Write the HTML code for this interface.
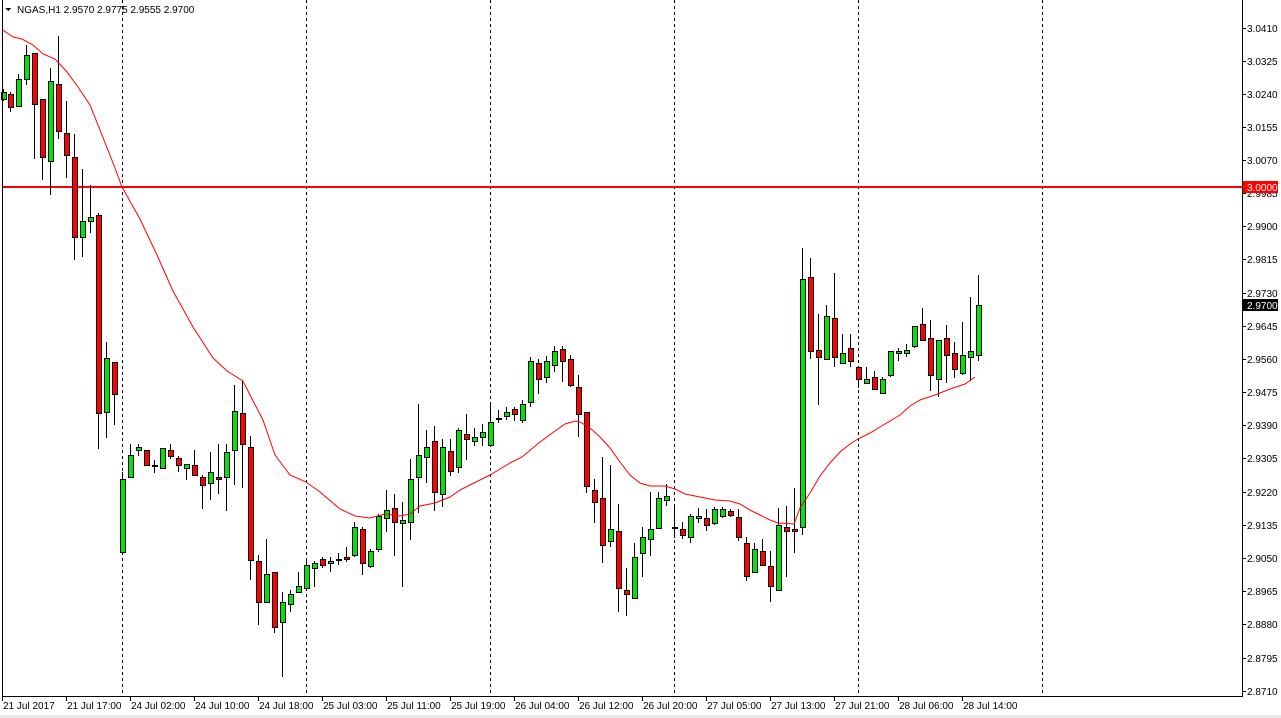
<!DOCTYPE html>
<html><head><meta charset="utf-8"><style>
html,body{margin:0;padding:0;background:#fff;overflow:hidden}
svg{display:block;font-family:"Liberation Sans",sans-serif}
</style></head><body>
<svg id="c" width="1281" height="718" xmlns="http://www.w3.org/2000/svg" shape-rendering="crispEdges">
<rect x="0" y="0" width="1281" height="718" fill="#fff"/>
<rect x="0" y="715" width="1281" height="3" fill="#e8e8e8"/>
<g stroke="#000" stroke-dasharray="3,3" stroke-width="1">
<line x1="122.5" y1="0" x2="122.5" y2="696"/>
<line x1="306.5" y1="0" x2="306.5" y2="696"/>
<line x1="490.5" y1="0" x2="490.5" y2="696"/>
<line x1="674.5" y1="0" x2="674.5" y2="696"/>
<line x1="858.5" y1="0" x2="858.5" y2="696"/>
<line x1="1042.5" y1="0" x2="1042.5" y2="696"/>
</g>
<line x1="2" y1="187" x2="1242" y2="187" stroke="#ff0000" stroke-width="2"/>
<g id="cand"></g>
<polyline id="ma" fill="none" stroke="#ff0000" stroke-width="1" shape-rendering="auto" points="3,30 13,37 22,39 33,45 43,54 55,59 67,72 78,87 90,105 100,130 115,168 122,187 140,219 157,255 173,291 193,327 213,358 227,371 243,381 250,395 263,420 275,455 290,475 306,482 320,492 340,509 355,516 370,518 385,514 400,516 410,514 420,506 435,503 450,497 460,490 470,485 480,480 490,475 500,469 510,463 522,457 540,442 555,431 565,424 575,421 580,422 590,428 600,437 610,448 620,462 630,475 640,483 650,486 665,486 675,489 685,494 700,497 715,500 730,501 740,504 750,510 760,515 770,520 778,523 794,524 800,508 810,493 820,476 830,463 840,452 850,444 858,439 870,433 880,427 890,421 900,415 910,406 920,400 935,395 950,389 965,384 975,377"/>
<g stroke="#000" stroke-width="1">
<line x1="2.5" y1="0" x2="2.5" y2="697"/>
<line x1="1242.5" y1="0" x2="1242.5" y2="697"/>
<line x1="2" y1="696.5" x2="1243" y2="696.5"/>
</g>
<g id="ticks" stroke="#000"></g>
<g font-size="10" fill="#000">
<text x="1247" y="32">3.0410</text>
<text x="1247" y="65">3.0325</text>
<text x="1247" y="98">3.0240</text>
<text x="1247" y="131">3.0155</text>
<text x="1247" y="164">3.0070</text>
<text x="1247" y="197">2.9985</text>
<text x="1247" y="230">2.9900</text>
<text x="1247" y="263">2.9815</text>
<text x="1247" y="297">2.9730</text>
<text x="1247" y="330">2.9645</text>
<text x="1247" y="363">2.9560</text>
<text x="1247" y="396">2.9475</text>
<text x="1247" y="429">2.9390</text>
<text x="1247" y="462">2.9305</text>
<text x="1247" y="496">2.9220</text>
<text x="1247" y="529">2.9135</text>
<text x="1247" y="562">2.9050</text>
<text x="1247" y="595">2.8965</text>
<text x="1247" y="628">2.8880</text>
<text x="1247" y="662">2.8795</text>
<text x="1247" y="695">2.8710</text>
</g>
<rect x="1243" y="181" width="35" height="12" fill="#ff0000"/>
<text x="1247" y="191" font-size="10" fill="#fff">3.0000</text>
<rect x="1243" y="299" width="35" height="12" fill="#000"/>
<text x="1247" y="309" font-size="10" fill="#fff">2.9700</text>
<g font-size="10" fill="#000">
<text x="3" y="709">21 Jul 2017</text>
<text x="67" y="709">21 Jul 17:00</text>
<text x="131" y="709">24 Jul 02:00</text>
<text x="195" y="709">24 Jul 10:00</text>
<text x="259" y="709">24 Jul 18:00</text>
<text x="323" y="709">25 Jul 03:00</text>
<text x="387" y="709">25 Jul 11:00</text>
<text x="451" y="709">25 Jul 19:00</text>
<text x="515" y="709">26 Jul 04:00</text>
<text x="579" y="709">26 Jul 12:00</text>
<text x="643" y="709">26 Jul 20:00</text>
<text x="707" y="709">27 Jul 05:00</text>
<text x="771" y="709">27 Jul 13:00</text>
<text x="835" y="709">27 Jul 21:00</text>
<text x="899" y="709">28 Jul 06:00</text>
<text x="963" y="709">28 Jul 14:00</text>
</g>
<path d="M5,8 L11,8 L8,11 Z" fill="#000"/>
<text x="17" y="13" font-size="10" fill="#000">NGAS,H1  2.9570 2.9775 2.9555 2.9700</text>
</svg>
<script>
var C=[
[3,89,101,99,92],[10,92,112,94,107],[18,74,107,106,79],[26,45,85,79,55],[34,53,159,53,104],
[42,99,180,99,157],[50,68,195,161,81],[58,36,139,84,131],[66,101,178,133,155],[74,134,260,157,237],
[82,169,257,237,221],[90,185,233,221,217],[98,213,449,215,413],[106,342,438,412,358],[114,362,425,362,394],
[122,472,552,552,479],[130,444,477,477,455],[138,444,456,450,447],[146,450,465,450,465],[154,460,473,465,465],
[162,448,468,468,448],[170,444,459,450,456],[178,456,472,458,465],[186,464,480,468,464],[194,450,475,465,475],
[202,475,509,477,485],[210,452,500,483,472],[218,444,494,477,479],[226,444,511,477,452],[234,385,485,450,411],
[242,380,488,413,444],[250,436,580,447,560],[258,555,625,561,602],[266,539,602,602,574],[274,572,633,572,627],
[282,592,677,622,602],[290,590,612,604,594],[298,572,592,592,586],[306,560,590,588,565],[314,561,587,568,563],
[322,557,568,559,565],[330,557,572,563,561],[338,553,565,559,559],[346,547,562,557,559],[354,522,557,555,527],
[362,527,575,529,563],[370,549,568,566,551],[378,514,552,549,516],[386,490,532,518,510],[394,494,556,508,522],
[402,502,587,523,520],[410,459,540,522,479],[418,404,513,477,455],[426,430,483,457,447],[434,426,511,441,492],
[442,439,507,494,447],[450,439,476,451,471],[458,428,473,467,430],[466,414,460,434,439],[474,428,446,441,437],
[482,424,446,437,432],[490,404,445,445,422],[498,410,423,418,418],[506,407,420,416,412],[514,407,421,409,414],
[522,400,423,420,404],[530,357,407,402,361],[538,359,394,363,379],[546,356,383,377,361],[554,346,372,365,351],
[562,346,382,349,361],[570,355,387,359,385],[578,375,437,387,414],[586,412,493,412,486],[594,479,523,490,502],
[602,457,563,498,545],[610,465,547,541,529],[618,504,612,531,588],[626,568,616,590,594],[634,543,598,598,557],
[642,527,577,553,537],[650,492,556,539,529],[658,492,529,528,498],[666,484,506,500,496],[674,506,538,527,527],
[682,522,539,529,535],[690,514,543,537,516],[698,508,523,518,516],[706,509,531,518,525],[714,507,525,523,509],
[722,507,518,516,509],[730,509,517,511,515],[738,509,541,517,537],[746,537,581,543,576],[754,543,572,572,549],
[762,539,565,551,565],[770,551,602,566,586],[778,508,590,590,525],[786,506,577,527,531],[794,488,553,529,531],
[802,248,535,527,279],[810,258,359,277,351],[818,314,405,350,357],[826,305,359,359,316],[834,273,367,318,357],
[842,334,363,363,353],[850,334,367,348,361],[858,367,388,367,379],[866,367,383,383,379],[874,371,389,377,389],
[882,377,393,393,379],[890,351,377,375,351],[898,348,361,353,351],[906,344,357,353,350],[914,326,348,346,326],
[922,308,340,324,340],[930,320,391,338,375],[938,340,397,379,340],[946,325,383,338,355],[954,342,378,353,369],
[962,322,375,373,355],[970,297,381,357,351],[978,275,361,355,305]];
var g=document.getElementById('cand'),s='';
C.forEach(function(c){var x=c[0],h=c[1],l=c[2],o=c[3],cl=c[4];
var bull=cl<=o, top=Math.min(o,cl), bh=Math.max(Math.abs(o-cl),1);
s+='<line x1="'+(x+.5)+'" y1="'+h+'" x2="'+(x+.5)+'" y2="'+l+'" stroke="#000"/>';
s+='<rect x="'+(x-2+.5)+'" y="'+(top+.5)+'" width="5" height="'+bh+'" fill="'+(bull?'#00e600':'#ff0000')+'" stroke="#000"/>';});
g.innerHTML=s;
var t='';
[28,61,94,127,160,193,226,259,293,326,359,392,425,458,492,525,558,591,624,658,691].forEach(function(y){t+='<line x1="1242" y1="'+(y+.5)+'" x2="1246" y2="'+(y+.5)+'"/>';});
for(var i=0;i<16;i++){var x=2+64*i;t+='<line x1="'+(x+.5)+'" y1="697" x2="'+(x+.5)+'" y2="701"/>';}
document.getElementById('ticks').innerHTML=t;
</script>
</body></html>
